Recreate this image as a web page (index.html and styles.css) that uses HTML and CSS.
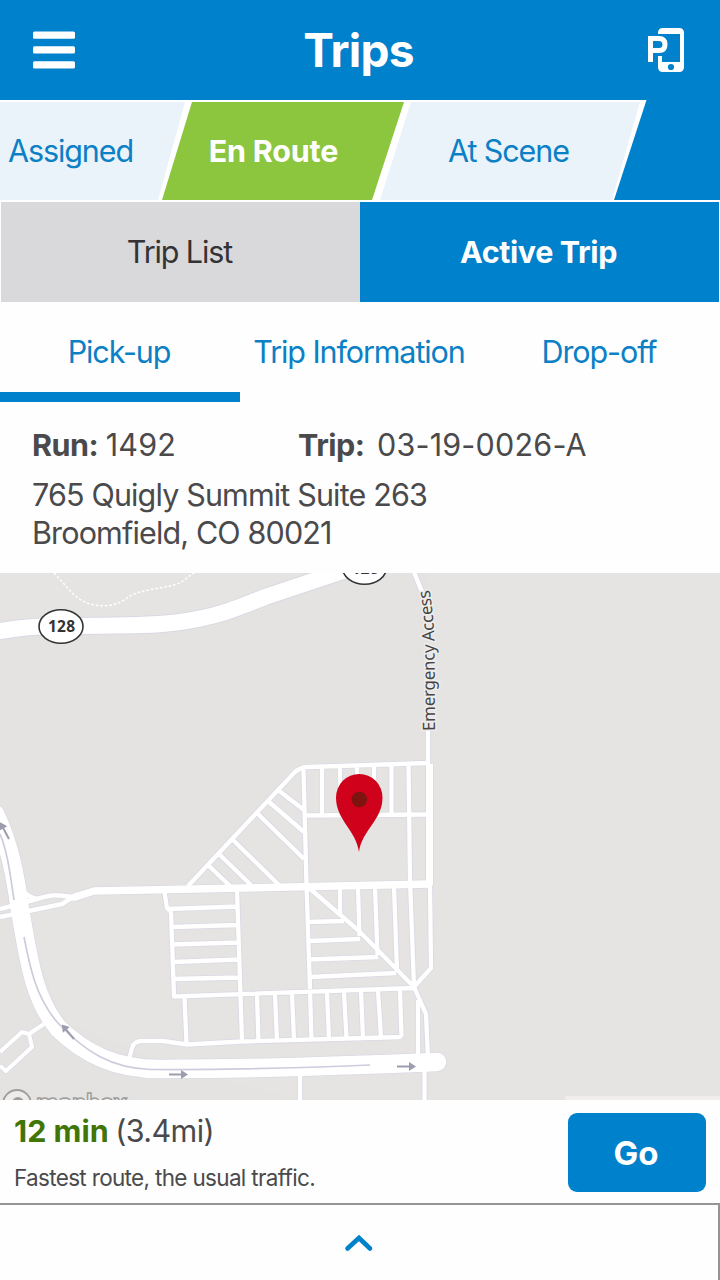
FILE: index.html
```html
<!DOCTYPE html>
<html lang="en">
<head>
  <meta charset="UTF-8" />
  <meta name="viewport" content="width=device-width, initial-scale=1.0"/>
  <title>Trips</title>
  <link rel="stylesheet" href="styles.css">
</head>
<body>
  <header class="header">
    <button class="icon-button" aria-label="Menu">
      <svg width="42" height="38" viewBox="0 0 42 38" fill="#fff">
        <rect y="0.500" width="42" height="7.2" rx="1.5"/>
        <rect y="15.300" width="42" height="7.2" rx="1.5"/>
        <rect y="30.300" width="42" height="7.2" rx="1.5"/>
      </svg>
    </button>
    <h1 class="title">Trips</h1>
    <button class="icon-button" aria-label="Phone parking">
      <svg width="36" height="44" viewBox="0 0 36 44">
        <path fill="#fff" fill-rule="evenodd" d="M10 6V5q0-5 5-5h16q5 0 5 5v34q0 5-5 5H15q-5 0-5-5V28h4v6h18V6z"/>
        <circle cx="23" cy="39" r="3.1" fill="#0081cb"/>
        <path fill="none" stroke="#fff" stroke-width="5" d="M2.500 34V10.500H11q6 0 6 6t-6 6H3"/>
      </svg>
    </button>
  </header>

  <div class="steps-bar">
    <ol class="steps">
      <li class="step step-first">Assigned</li>
      <li class="step step-active">En Route</li>
      <li class="step step-last">At Scene</li>
    </ol>
  </div>

  <nav class="views">
    <a class="view">Trip List</a>
    <a class="view view-active">Active Trip</a>
  </nav>

  <nav class="tabs">
    <a class="tab tab-active">Pick-up</a>
    <a class="tab">Trip Information</a>
    <a class="tab">Drop-off</a>
  </nav>

  <section class="details">
    <div class="ids">
      <div class="run"><b>Run:</b> <span class="number">1492</span></div>
      <div class="trip"><b>Trip:</b> <span class="number">03-19-0026-A</span></div>
    </div>
    <address class="address">
      <div>765 Quigly Summit Suite 263</div>
      <div>Broomfield, CO 80021</div>
    </address>
  </section>

  <!-- map drawn in page coordinates -->
  <svg class="map" width="720" height="527" viewBox="0 573 720 527">
    <defs>
      <g id="arrow"><path d="M0 0H13" stroke="#9c9daf" stroke-width="2"/><path d="M12-4.500L19 0L12 4.500z" fill="#9c9daf"/></g>

      <!-- parking lot aisles -->
      <path id="lanes" d="M188 886L294 773Q299 767.500 308 767L428 763M303.500 770L306.500 885L310 989M322 767V814M340 767V800M357 766V790M374 765V790M391.500 765V813M408.500 765L410 880L414 987M306 815.500L429 814.500
        M428 730V765M278 790L304 810M268 801L304 832M257 813L304 859M232 839L279 885M219 854L251 885M208 865L230 886
        M308 887L359 931L414 987M340 888V914M358 888L359.500 936M375 888L377.500 955M394 887L397 971M430 885L431 968L414 987
        M308 922L344 921M309 941L360 939M309 959.500L378 957M310 977L396 973
        M164.500 892L167 908L171 912L174 996.500L414 988M167 909L238 906.500M172 927L238 925M172 944.500L239 942.500M173 962L239 959.500M173 979L240 977.500M237 890L242 1041
        M184.500 997L186.500 1044M257 995L258.500 1042M275 995L277 1041M292 994L294 1040M310 990L311.500 1040M327 993L329 1039M344 992L346.500 1038M361 991L363 1038M378 991L381 1037M400 990L401.500 1037
        M401.500 1037L242 1041.500L187 1044.500L163 1041H142Q134 1041 132 1048L129 1059
        M414 987L426 1014L428 1058M418 1000L418 1060M300 1065V1100M424.500 1064V1100"/>
      <path id="ramps" d="M22 890Q28 897 37 899M0 909L37 899Q52 894 60 895.500L72 897M0 917L62 904L78 894"/>
      <path id="loop" d="M44 1024L29 1034M0 1052L22 1032L29 1034L32 1047L6 1071L0 1066"/>
      <path id="main-road" d="M72 898L94 891L170 889.500L430 884"/>
      <path id="side-road" d="M429.500 764V885"/>
      <path id="highway" d="M-5 632Q25 626 60 626C110 625 145 627 180 622S230 611 265 597L355 567"/>
      <path id="curve" d="M-5 814C9 843 15 873 20 910C29 960 33 997 58 1028C85 1054 115 1069 160 1069C250 1069 340 1066 437 1062"/>
    </defs>

    <rect y="573" width="720" height="527" fill="#e5e3e2"/>
    <path fill="#e5e4e2" d="M94 891L190 886L294 770L428 764V573H720V1100H300L180 1068L60 1020L22 900zM54 573H343L265 597L210 617H82L0 630V573z"/>

    <!-- road casings -->
    <g fill="none" stroke="#d9d9e4" stroke-linejoin="round">
      <use href="#lanes" stroke-width="6"/>
      <use href="#ramps" stroke-width="6"/>
      <use href="#loop" stroke-width="5.500"/>
      <use href="#main-road" stroke-width="9"/>
      <use href="#side-road" stroke-width="8.500"/>
      <use href="#highway" stroke-width="18"/>
      <use href="#curve" stroke-width="20" stroke-linecap="round"/>
      <path d="M413.500 571L428 606" stroke-width="6.500"/>
    </g>

    <g fill="none" stroke="#fff" stroke-linejoin="round">
      <use href="#lanes" stroke-width="4.300"/>
      <use href="#ramps" stroke-width="4.500"/>
      <use href="#loop" stroke-width="4"/>
      <use href="#main-road" stroke-width="7.500"/>
      <use href="#side-road" stroke-width="7"/>
      <use href="#highway" stroke-width="16"/>
      <use href="#curve" stroke-width="18.500" stroke-linecap="round"/>
      <path d="M413.500 571L427 604" stroke-width="4.500"/>
      <path d="M54 573C66 585 75 600 90 604S118 605 127 598S155 589 170 586S187 576 194 573" stroke-width="1.500" stroke-dasharray="2.500 2"/>
    </g>

    <!-- median -->
    <path d="M0 834C7 850 10 872 14 900M24 937C30 968 36 997 57 1022C86 1053 112 1068 150 1069.500C230 1070 300 1068 370 1065" fill="none" stroke="#ccccdc" stroke-width="1.700"/>

    <use href="#arrow" transform="translate(9 839) rotate(-118)"/>
    <use href="#arrow" transform="translate(74 1039) rotate(-130)"/>
    <use href="#arrow" transform="translate(169 1074.500)"/>
    <use href="#arrow" transform="translate(397 1066.500)"/>

    <!-- highway shields -->
    <g class="shield" text-anchor="middle">
      <ellipse cx="61" cy="626.500" rx="22" ry="16.700" fill="#fff" stroke="#333" stroke-width="1.600"/>
      <text x="61.500" y="632.300" textLength="27">128</text>
      <ellipse cx="364.500" cy="567.500" rx="22" ry="16.700" fill="#fff" stroke="#333" stroke-width="1.600"/>
      <text x="365" y="573.800" textLength="27">128</text>
    </g>

    <path id="access" d="M435 731L434.500 643Q434 615 428 580" fill="none"/>
    <text class="road-name"><textPath href="#access" textLength="142">Emergency Access</textPath></text>

    <path d="M359 852C356 830 336 820 336 797.500A23.200 23.500 0 0 1 382.500 797.500C382.500 820 362 830 359 852z" fill="#d0021b"/>
    <circle cx="359.300" cy="799.500" r="7.800" fill="#7d140f"/>

    <!-- attribution, cut by the panel below -->
    <circle cx="17" cy="1104" r="14" fill="#eeeceb" stroke="#a09e9d" stroke-width="1.800"/>
    <circle cx="18" cy="1103" r="6" fill="#a09e9d"/>
    <text class="mapbox" x="36" y="1111" textLength="91">mapbox</text>
    <rect x="565" y="1096" width="155" height="4" fill="#f0edec"/>
  </svg>

  <section class="route">
    <div>
      <div class="eta"><b class="minutes">12 min</b> <span class="distance">(3.4mi)</span></div>
      <p class="traffic">Fastest route, the usual traffic.</p>
    </div>
    <button class="go-button">Go</button>
  </section>

  <footer class="drawer">
    <svg width="30" height="20" viewBox="0 0 30 20">
      <path d="M3.500 15.500L15 5L26 15.500" fill="none" stroke="#0081cb" stroke-width="4.600" stroke-linecap="round"/>
    </svg>
  </footer>
</body>
</html>
```
FILE: styles.css
```css
* {
  box-sizing: border-box;
}

body {
  margin: 0;
  width: 720px;
  height: 1280px;
  overflow: hidden;
  display: flex;
  flex-direction: column;
  font-family: Inter, "Liberation Sans", sans-serif;
  font-size: 30.5px;
  letter-spacing: -1.1px;
  color: #4a4a4c;
  background-color: #fefefe;
}

b {
  letter-spacing: -0.5px;
}

.header {
  height: 100px;
  padding: 0 36px 0 33px;
  display: flex;
  justify-content: space-between;
  align-items: center;
  color: white;
  background-color: #0081cb;
}

.icon-button {
  padding: 0;
  border: none;
  background: none;
  display: flex;
}

.title {
  margin: 0 6px 0 0;
  font-size: 46px;
  font-weight: 700;
  letter-spacing: -0.8px;
}

/* Trip status arrows */
.steps-bar {
  height: 102px;
  background-color: #0081cb;
  border-bottom: 2px solid white;
}

.steps {
  margin: 0;
  padding: 2px 0 0;
  height: 100px;
  width: 647px;
  list-style: none;
  display: flex;
  background-color: white;
  clip-path: polygon(0 0, 646.5px 0, 614px 100%, 0 100%);
}

.step {
  display: flex;
  align-items: center;
  justify-content: center;
  padding-bottom: 2px;
  color: #0b80c5;
  background-color: #eaf2fa;
}

.step-first {
  width: 185px;
  padding-left: 8px;
  justify-content: flex-start;
  clip-path: polygon(0 0, 100% 0, 158px 100%, 0 100%);
}

.step-active {
  width: 242px;
  margin-left: -23px;
  padding-right: 19px;
  padding-bottom: 1px;
  font-weight: 700;
  letter-spacing: -0.2px;
  color: white;
  background-color: #8cc63f;
  clip-path: polygon(30px 0, 100% 0, 210px 100%, 0 100%);
}

.step-last {
  width: 260px;
  margin-left: -24px;
  padding-right: 3px;
  clip-path: polygon(31px 0, 100% 0, 232px 100%, 0 100%);
}

/* Trip list / active trip switch */
.views {
  display: flex;
  height: 100px;
  padding: 0 1px;
}

.view {
  flex: 1;
  display: flex;
  align-items: center;
  justify-content: center;
  padding: 0 2px 2px 0;
  color: #333335;
  background-color: #d9d8da;
}

.view-active {
  font-weight: 700;
  letter-spacing: -0.4px;
  color: white;
  background-color: #0081cb;
}

.tabs {
  display: flex;
  height: 100px;
}

.tab {
  flex: 1;
  display: flex;
  align-items: center;
  justify-content: center;
  padding: 8px 2px 0 0;
  border-bottom: 10px solid transparent;
  color: #0b80c5;
}

.tab-active {
  border-color: #0081cb;
}

/* Run and address */
.details {
  height: 171px;
  padding: 24px 32px 0;
}

.ids {
  display: flex;
  line-height: 38px;
}

.run {
  width: 266px;
}

.number {
  letter-spacing: 0.2px;
}

.trip .number {
  margin-left: 5px;
}

.address {
  margin-top: 12px;
  font-style: normal;
  line-height: 38px;
  letter-spacing: -0.85px;
}

.map {
  display: block;
  flex: none;
}

.shield {
  font-family: "Noto Sans", sans-serif;
  font-size: 15.5px;
  font-weight: 700;
  letter-spacing: 0;
  fill: #333;
}

.road-name {
  font-family: "Noto Sans", sans-serif;
  font-size: 17px;
  letter-spacing: 0;
  fill: #444;
  stroke: #eeecea;
  stroke-width: 3px;
  paint-order: stroke;
}

.mapbox {
  font-family: "Open Sans", sans-serif;
  font-size: 23px;
  font-weight: 700;
  letter-spacing: 0;
  fill: #eeeceb;
  stroke: #a09e9d;
  stroke-width: 1.5px;
}

/* Route summary */
.route {
  height: 103px;
  padding: 12px 14px 0;
  display: flex;
  justify-content: space-between;
}

.eta {
  line-height: 38px;
}

.minutes {
  letter-spacing: 0;
  color: #417505;
}

.distance {
  margin-left: -1px;
  letter-spacing: -0.6px;
}

.traffic {
  margin: 14px 0 0;
  font-size: 22.5px;
  line-height: 28px;
  letter-spacing: -0.67px;
}

.go-button {
  width: 138px;
  height: 79px;
  margin-top: 1px;
  padding: 0 2px 0 0;
  border: none;
  border-radius: 9px;
  font-family: inherit;
  font-size: 33px;
  font-weight: 700;
  color: white;
  background-color: #0081cb;
}

.drawer {
  flex: 1;
  padding: 28px 1px 0 0;
  text-align: center;
  line-height: 0;
  border-top: 2px solid #959597;
  border-right: 2px solid #959597;
}
```
